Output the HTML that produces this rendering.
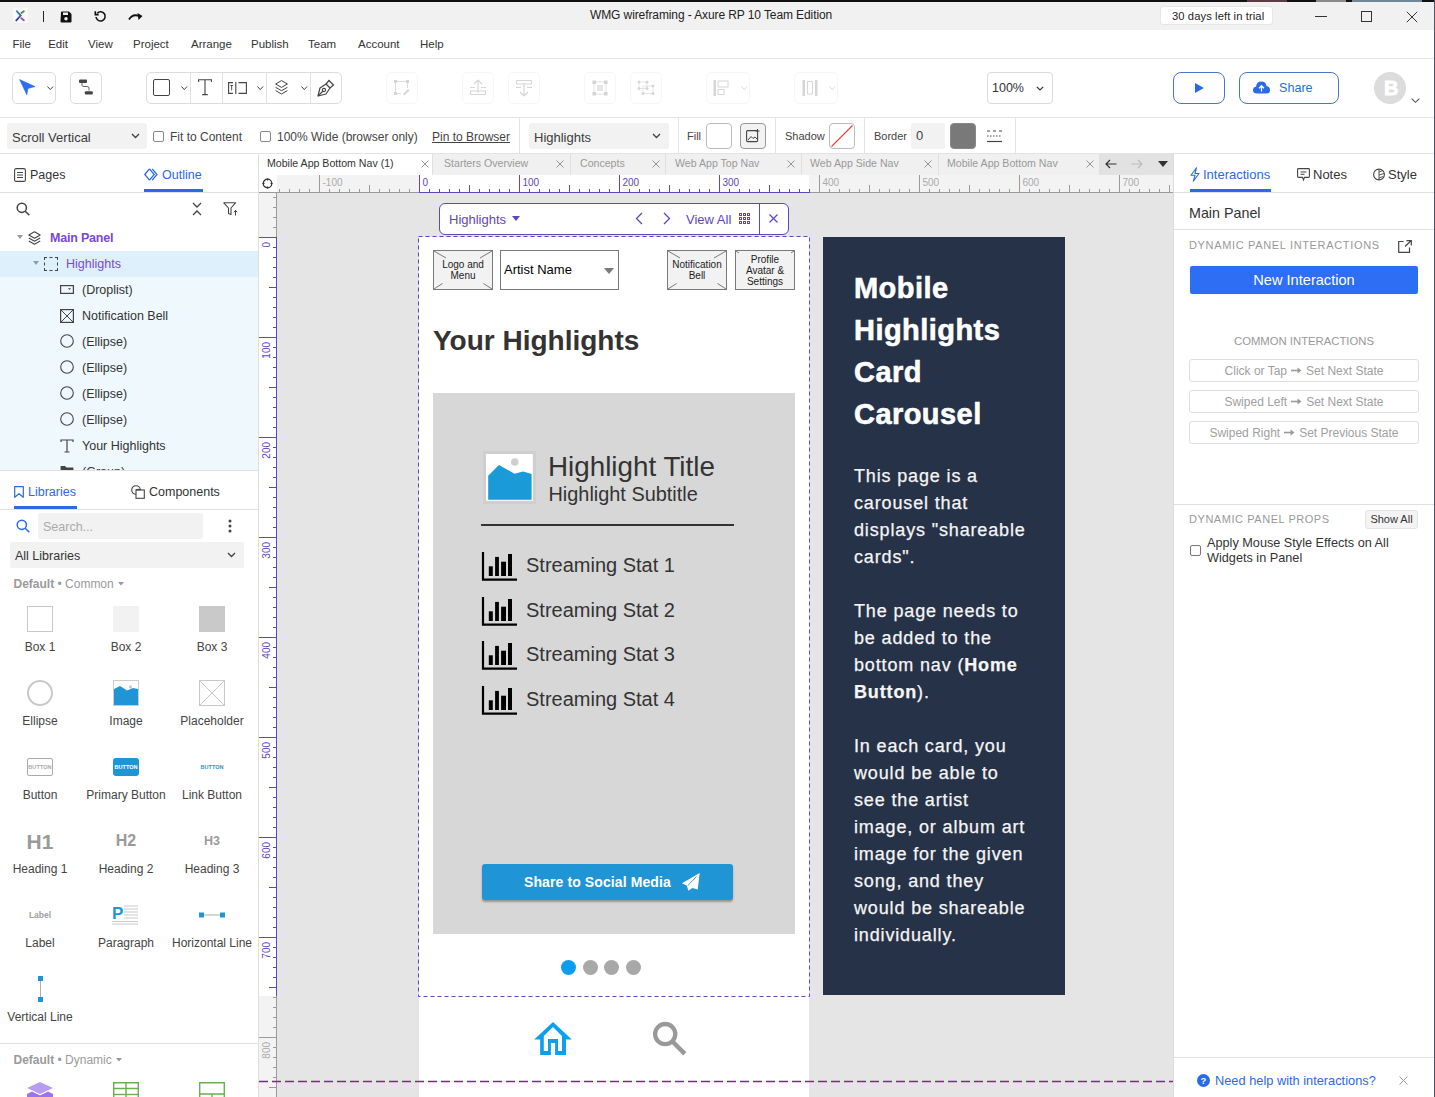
<!DOCTYPE html>
<html><head><meta charset="utf-8">
<style>
*{margin:0;padding:0;box-sizing:border-box}
html,body{width:1435px;height:1097px;overflow:hidden;background:#fff;font-family:"Liberation Sans",sans-serif;color:#333}
.a{position:absolute}
.t{position:absolute;white-space:nowrap;line-height:1}
svg{position:absolute;overflow:visible}
.hl{position:absolute;background:#e3e3e3}
.vl{position:absolute;background:#e3e3e3}
</style></head><body>
<!-- top black strip -->
<div class="a" style="left:0;top:0;width:1435px;height:2px;background:#111"></div><div class="a" style="left:1247px;top:0;width:40px;height:2px;background:#5c3a48"></div><div class="a" style="left:1316px;top:0;width:30px;height:2px;background:#8a8a8a"></div><div class="a" style="left:1352px;top:0;width:70px;height:2px;background:#6f8796"></div>
<!-- title bar -->
<div class="a" style="left:0;top:2px;width:1434px;height:28px;background:#f1f1f1"></div>
<div class="a" style="left:1434px;top:0;width:1px;height:1097px;background:#4c5263"></div>

<div class="a" style="left:13px;top:8px;width:15px;height:15px;background:#fafafa;border-radius:3px"></div>
<svg style="left:14px;top:9px" width="13" height="13" viewBox="0 0 13 13"><defs><linearGradient id="lg" x1="0" y1="0" x2="0" y2="1"><stop offset="0" stop-color="#3b8fa8"/><stop offset="1" stop-color="#3a35a8"/></linearGradient></defs>
 <path d="M2.75 2.2 L6.7 6.6 L2.3 11.4" stroke="url(#lg)" stroke-width="1.9" fill="none" stroke-linecap="round"/>
 <path d="M7.4 4 L9.8 2.2" stroke="#4f8f4a" stroke-width="1.9" fill="none" stroke-linecap="round"/>
 <path d="M7.4 9.2 L9.8 11.3" stroke="#b04ab0" stroke-width="1.9" fill="none" stroke-linecap="round"/>
</svg>
<div class="a" style="left:43px;top:11px;width:1px;height:11px;background:#222"></div>
<svg style="left:60px;top:11px" width="12" height="12" viewBox="0 0 12 12"><path d="M1 1.5 Q1 0.5 2 0.5 H9 L11.5 3 V10.5 Q11.5 11.5 10.5 11.5 H1.5 Q0.5 11.5 0.5 10.5 Z" fill="#111"/><rect x="3" y="1.5" width="5" height="2.5" fill="#f1f1f1"/><circle cx="6" cy="7.8" r="1.7" fill="#f1f1f1"/></svg>
<svg style="left:94px;top:10px" width="13" height="13" viewBox="0 0 13 13"><path d="M3.2 3.2 A4.6 4.6 0 1 1 2 7" stroke="#111" stroke-width="1.6" fill="none"/><path d="M1.3 1.2 V4.6 H4.7" stroke="#111" stroke-width="1.6" fill="none"/></svg>
<svg style="left:128px;top:11px" width="16" height="10" viewBox="0 0 16 10"><path d="M1 8.5 Q5 2 12 5.5" stroke="#111" stroke-width="1.8" fill="none"/><path d="M9.5 2 L14.5 5 L10.5 9 Z" fill="#111"/></svg>
<div class="t" style="left:590px;top:9px;font-size:12px;color:#222;letter-spacing:-0.1px">WMG wireframing - Axure RP 10 Team Edition</div>
<div class="a" style="left:1160px;top:6px;width:113px;height:19px;background:#fff;border:1px solid #e6e6e6;border-radius:3px"></div>
<div class="t" style="left:1172px;top:10.5px;font-size:11.2px;color:#222;letter-spacing:0.1px">30 days left in trial</div>
<div class="a" style="left:1315px;top:16px;width:12px;height:1px;background:#333"></div>
<div class="a" style="left:1361px;top:11px;width:11px;height:11px;border:1px solid #333"></div>
<svg style="left:1406px;top:11px" width="12" height="12" viewBox="0 0 12 12"><path d="M0.8 0.8 L11.2 11.2 M11.2 0.8 L0.8 11.2" stroke="#333" stroke-width="1"/></svg>

<!-- menu bar -->
<div class="hl" style="left:0;top:58px;width:1434px;height:1px"></div>
<div class="t" style="left:12.4px;top:39px;font-size:11.5px;color:#333">File</div>
<div class="t" style="left:48.2px;top:39px;font-size:11.5px;color:#333">Edit</div>
<div class="t" style="left:88px;top:39px;font-size:11.5px;color:#333">View</div>
<div class="t" style="left:133px;top:39px;font-size:11.5px;color:#333">Project</div>
<div class="t" style="left:191px;top:39px;font-size:11.5px;color:#333">Arrange</div>
<div class="t" style="left:251px;top:39px;font-size:11.5px;color:#333">Publish</div>
<div class="t" style="left:308px;top:39px;font-size:11.5px;color:#333">Team</div>
<div class="t" style="left:358px;top:39px;font-size:11.5px;color:#333">Account</div>
<div class="t" style="left:420px;top:39px;font-size:11.5px;color:#333">Help</div>

<!-- toolbar -->
<div class="hl" style="left:0;top:117px;width:1434px;height:1px"></div>
<div class="a" style="left:12px;top:72px;width:44px;height:32px;border:1px solid #dcdcdc;border-radius:5px"></div>
<svg style="left:19px;top:79px" width="17" height="17" viewBox="0 0 17 17"><path d="M0.6 0.6 L16 7.6 L9 9.4 L7.8 15.7 Z" fill="#2b6cf0" stroke="#2b6cf0" stroke-width="0.6" stroke-linejoin="round"/></svg><svg style="left:46.5px;top:86px" width="6.5" height="4.5" viewBox="0 0 6.5 4.5"><path d="M0.5 0.5 L3.25 3.6 L6 0.5" stroke="#444" stroke-width="1" fill="none"/></svg><div class="a" style="left:70px;top:72px;width:32px;height:32px;border:1px solid #dcdcdc;border-radius:5px"></div>
<svg style="left:78px;top:79px" width="16" height="16" viewBox="0 0 16 16"><rect x="1" y="0.5" width="8" height="3.5" rx="1" fill="#444"/><rect x="6.8" y="12.3" width="8" height="3.3" rx="1" fill="#444"/><path d="M4 4 V6.5 Q4 7.5 6 7.5 H9 Q11 7.5 11 9 V11.5" stroke="#555" stroke-width="0.9" fill="none"/></svg><div class="a" style="left:146px;top:72px;width:196px;height:32px;border:1px solid #dcdcdc;border-radius:5px"></div>
<div class="a" style="left:190px;top:73px;width:1px;height:30px;background:#e0e0e0"></div><div class="a" style="left:222px;top:73px;width:1px;height:30px;background:#e0e0e0"></div><div class="a" style="left:266px;top:73px;width:1px;height:30px;background:#e0e0e0"></div><div class="a" style="left:310px;top:73px;width:1px;height:30px;background:#e0e0e0"></div><div class="a" style="left:153px;top:79px;width:17px;height:17px;border:1.5px solid #444;border-radius:2px"></div><svg style="left:181px;top:86px" width="6.5" height="4.5" viewBox="0 0 6.5 4.5"><path d="M0.5 0.5 L3.25 3.6 L6 0.5" stroke="#444" stroke-width="1" fill="none"/></svg><svg style="left:198px;top:79px" width="14" height="17" viewBox="0 0 14 17"><path d="M0.6 3 V0.8 H13.4 V3 M7 0.8 V15.6 M4.2 15.6 H9.8" stroke="#444" stroke-width="1.1" fill="none"/></svg><svg style="left:228px;top:82px" width="19" height="12" viewBox="0 0 19 12"><path d="M5 0.6 H0.6 V11.4 H5 M7.8 0 V12 M10.5 0.6 H18.4 V11.4 H10.5" stroke="#444" stroke-width="1.1" fill="none"/><path d="M2.3 3.5 H5 M3.65 3.5 V8.5" stroke="#444" stroke-width="0.9"/></svg><svg style="left:257px;top:86px" width="6.5" height="4.5" viewBox="0 0 6.5 4.5"><path d="M0.5 0.5 L3.25 3.6 L6 0.5" stroke="#444" stroke-width="1" fill="none"/></svg><svg style="left:275px;top:80px" width="13" height="15" viewBox="0 0 13 15"><path d="M6.5 0.6 L12.4 4 L6.5 7.4 L0.6 4 Z" stroke="#444" stroke-width="1" fill="none" stroke-linejoin="round"/><path d="M0.6 7.3 L6.5 10.7 L12.4 7.3 M0.6 10.6 L6.5 14 L12.4 10.6" stroke="#444" stroke-width="1" fill="none" stroke-linejoin="round"/></svg><svg style="left:301px;top:86px" width="6.5" height="4.5" viewBox="0 0 6.5 4.5"><path d="M0.5 0.5 L3.25 3.6 L6 0.5" stroke="#444" stroke-width="1" fill="none"/></svg><svg style="left:317px;top:79px" width="18" height="18" viewBox="0 0 18 18"><path d="M1 17 L3 9 L9 5 L13 9 L9 15 Z" stroke="#444" stroke-width="1.2" fill="none" stroke-linejoin="round"/><path d="M9 5 L12 1.5 L16.5 6 L13 9" stroke="#444" stroke-width="1.2" fill="none"/><circle cx="7" cy="11" r="1.6" stroke="#444" stroke-width="1.1" fill="none"/><path d="M1 17 L6 12" stroke="#444" stroke-width="1.1"/></svg><div class="a" style="left:386px;top:72px;width:32px;height:32px;border:1px solid #f6f6f6;border-radius:5px"></div><div class="a" style="left:462px;top:72px;width:32px;height:32px;border:1px solid #f6f6f6;border-radius:5px"></div><div class="a" style="left:508px;top:72px;width:32px;height:32px;border:1px solid #f6f6f6;border-radius:5px"></div><div class="a" style="left:584px;top:72px;width:32px;height:32px;border:1px solid #f6f6f6;border-radius:5px"></div><div class="a" style="left:630px;top:72px;width:32px;height:32px;border:1px solid #f6f6f6;border-radius:5px"></div><div class="a" style="left:706px;top:72px;width:44px;height:32px;border:1px solid #f6f6f6;border-radius:5px"></div><div class="a" style="left:794px;top:72px;width:44px;height:32px;border:1px solid #f6f6f6;border-radius:5px"></div><svg style="left:393px;top:79px" width="18" height="18" viewBox="0 0 18 18"><rect x="1" y="1" width="3" height="3" fill="#d6d6d6"/><rect x="13" y="1" width="3" height="3" fill="#d6d6d6"/><rect x="1" y="13" width="3" height="3" fill="#d6d6d6"/><path d="M4 2.5 H13 M2.5 4 V13 M14.5 4 V9 M4 14.5 H8" stroke="#d6d6d6" stroke-width="0.8"/><path d="M10 15 L15 10 L16.5 11.5 L11.5 16.5 Z" fill="#d6d6d6"/></svg><svg style="left:469px;top:79px" width="18" height="18" viewBox="0 0 18 18"><path d="M9 1 L5 5 M9 1 L13 5 M9 1 V14" stroke="#d6d6d6" stroke-width="1.2" fill="none"/><rect x="1.5" y="12" width="15" height="3.5" rx="0.5" stroke="#d6d6d6" stroke-width="1.2" fill="none"/><path d="M1 8.5 H6 M12 8.5 H17" stroke="#d6d6d6" stroke-width="1"/></svg><svg style="left:515px;top:79px" width="18" height="18" viewBox="0 0 18 18"><path d="M9 17 L5 13 M9 17 L13 13 M9 17 V4" stroke="#d6d6d6" stroke-width="1.2" fill="none"/><rect x="1.5" y="1.5" width="15" height="3.5" rx="0.5" stroke="#d6d6d6" stroke-width="1.2" fill="none"/><path d="M1 8.5 H6 M12 8.5 H17" stroke="#d6d6d6" stroke-width="1"/></svg><svg style="left:592px;top:80px" width="16" height="16" viewBox="0 0 16 16"><rect x="0.5" y="0.5" width="3.5" height="3.5" fill="#d6d6d6"/><rect x="12" y="0.5" width="3.5" height="3.5" fill="#d6d6d6"/><rect x="0.5" y="12" width="3.5" height="3.5" fill="#d6d6d6"/><rect x="12" y="12" width="3.5" height="3.5" fill="#d6d6d6"/><path d="M4 2 H12 M4 14 H12 M2 4 V12 M14 4 V12" stroke="#d6d6d6" stroke-width="0.7"/><rect x="5" y="5" width="6" height="6" fill="#e6e6e6"/></svg><svg style="left:637px;top:80px" width="18" height="15" viewBox="0 0 18 15"><circle cx="2" cy="2" r="1.5" fill="#d6d6d6"/><circle cx="10" cy="2" r="1.5" fill="#d6d6d6"/><circle cx="2" cy="8.5" r="1.5" fill="#d6d6d6"/><circle cx="10" cy="8.5" r="1.5" fill="#d6d6d6"/><circle cx="16" cy="6" r="1.5" fill="#d6d6d6"/><circle cx="6" cy="13.5" r="1.5" fill="#d6d6d6"/><circle cx="16" cy="13.5" r="1.5" fill="#d6d6d6"/><path d="M2 2 H10 V8.5 H2 Z M6 6 H16 V13.5 H6 Z" stroke="#d6d6d6" stroke-width="0.6" fill="none"/></svg><svg style="left:713px;top:80px" width="16" height="16" viewBox="0 0 16 16"><rect x="0.5" y="0" width="2.5" height="16" fill="#d6d6d6"/><rect x="5" y="1" width="10" height="6" stroke="#d6d6d6" stroke-width="1" fill="none"/><rect x="5" y="9.5" width="6" height="5" stroke="#d6d6d6" stroke-width="1" fill="none"/></svg><svg style="left:741px;top:86px" width="6.5" height="4.5" viewBox="0 0 6.5 4.5"><path d="M0.5 0.5 L3.25 3.6 L6 0.5" stroke="#d6d6d6" stroke-width="1" fill="none"/></svg><svg style="left:802px;top:80px" width="16" height="16" viewBox="0 0 16 16"><rect x="0.5" y="0" width="2.5" height="16" fill="#d6d6d6"/><rect x="13" y="0" width="2.5" height="16" fill="#d6d6d6"/><rect x="5.5" y="1.5" width="5" height="12.5" stroke="#d6d6d6" stroke-width="1" fill="none"/></svg><svg style="left:829px;top:86px" width="6.5" height="4.5" viewBox="0 0 6.5 4.5"><path d="M0.5 0.5 L3.25 3.6 L6 0.5" stroke="#d6d6d6" stroke-width="1" fill="none"/></svg><div class="a" style="left:987px;top:72px;width:66px;height:32px;border:1px solid #dcdcdc;border-radius:4px"></div><div class="t" style="left:992px;top:82px;font-size:12.5px;color:#333">100%</div><svg style="left:1036px;top:86px" width="8" height="5" viewBox="0 0 8 5"><path d="M0.8 0.8 L4 4 L7.2 0.8" stroke="#333" stroke-width="1.2" fill="none"/></svg><div class="a" style="left:1173px;top:72px;width:52px;height:32px;border:1.5px solid #4a74cc;border-radius:8px"></div><svg style="left:1195px;top:83px" width="9" height="10" viewBox="0 0 9 10"><path d="M0 0 L9 5 L0 10 Z" fill="#2a6ae8"/></svg><div class="a" style="left:1239px;top:72px;width:100px;height:32px;border:1.5px solid #4a74cc;border-radius:8px"></div><svg style="left:1253px;top:81px" width="17" height="13" viewBox="0 0 17 13"><path d="M4 12.5 Q0 12.5 0 9 Q0 6 3 5.8 Q3.5 0.5 8.5 0.5 Q13 0.5 13.5 5 Q17 5.5 17 9 Q17 12.5 13.5 12.5 Z" fill="#2a6ae8"/><path d="M8.5 10.5 V5 M6 7.2 L8.5 4.7 L11 7.2" stroke="#fff" stroke-width="1.3" fill="none"/></svg><div class="t" style="left:1279px;top:81.5px;font-size:12.6px;color:#2a6ae8">Share</div><div class="a" style="left:1374px;top:72px;width:32px;height:32px;border-radius:50%;background:#dcdcdc"></div><div class="t" style="left:1384px;top:78px;font-size:20px;font-weight:700;color:#fff;-webkit-text-stroke:0.8px #fff">B</div><svg style="left:1411px;top:98px" width="9" height="5" viewBox="0 0 9 5"><path d="M0.6 0.6 L4.5 4.3 L8.4 0.6" stroke="#555" stroke-width="1.1" fill="none"/></svg>
<!-- property bar -->
<div class="hl" style="left:0;top:153px;width:1434px;height:1px"></div>
<div class="a" style="left:7px;top:123px;width:140px;height:26px;background:#f2f2f2;border-radius:3px"></div><div class="t" style="left:12px;top:130.5px;font-size:13px;color:#3c3c3c">Scroll Vertical</div><svg style="left:131px;top:133px" width="9" height="6" viewBox="0 0 9 6"><path d="M1 1 L4.5 4.5 L8 1" stroke="#444" stroke-width="1.4" fill="none"/></svg><div class="a" style="left:153px;top:131px;width:11px;height:11px;border:1px solid #888;border-radius:2px;background:#fff"></div><div class="t" style="left:170px;top:131px;font-size:12px;color:#444">Fit to Content</div><div class="a" style="left:260px;top:131px;width:11px;height:11px;border:1px solid #888;border-radius:2px;background:#fff"></div><div class="t" style="left:277px;top:131px;font-size:12px;color:#444">100% Wide (browser only)</div><div class="t" style="left:432px;top:131px;font-size:12px;color:#444;text-decoration:underline">Pin to Browser</div><div class="a" style="left:519px;top:118px;width:1px;height:35px;background:#e3e3e3"></div><div class="a" style="left:529px;top:123px;width:140px;height:26px;background:#f2f2f2;border-radius:3px"></div><div class="t" style="left:534px;top:130.5px;font-size:13px;color:#3c3c3c">Highlights</div><svg style="left:652px;top:133px" width="9" height="6" viewBox="0 0 9 6"><path d="M1 1 L4.5 4.5 L8 1" stroke="#444" stroke-width="1.4" fill="none"/></svg><div class="a" style="left:678px;top:118px;width:1px;height:35px;background:#e3e3e3"></div><div class="t" style="left:687px;top:131px;font-size:11px;color:#444">Fill</div><div class="a" style="left:706px;top:123px;width:26px;height:26px;border:1px solid #bbb;border-radius:4px;background:#fff"></div><div class="a" style="left:740px;top:123px;width:26px;height:26px;border:1px solid #999;border-radius:4px;background:#f2f2f2"></div><svg style="left:746px;top:129px" width="14" height="14" viewBox="0 0 14 14"><rect x="0.6" y="1.6" width="11" height="11" rx="1" stroke="#444" stroke-width="1.1" fill="none"/><path d="M2 11 L5 7.5 L7 9.5 L9 8 L11.5 10.5" stroke="#444" stroke-width="1" fill="none"/><path d="M11.5 0 V4 M9.5 2 H13.5" stroke="#444" stroke-width="1"/></svg><div class="a" style="left:775px;top:118px;width:1px;height:35px;background:#e3e3e3"></div><div class="t" style="left:785px;top:131px;font-size:11px;color:#444">Shadow</div><div class="a" style="left:829px;top:123px;width:26px;height:26px;border:1px solid #bbb;border-radius:4px;background:#fff;overflow:hidden"></div><svg style="left:829px;top:123px" width="26" height="26" viewBox="0 0 26 26"><path d="M2.5 23.5 L23.5 2.5" stroke="#e0443a" stroke-width="1.1"/></svg><div class="a" style="left:864px;top:118px;width:1px;height:35px;background:#e3e3e3"></div><div class="t" style="left:874px;top:131px;font-size:11px;color:#444">Border</div><div class="a" style="left:911px;top:123px;width:34px;height:26px;background:#f2f2f2;border-radius:3px"></div><div class="t" style="left:916px;top:129px;font-size:13px;color:#444">0</div><div class="a" style="left:950px;top:123px;width:26px;height:26px;border:1px solid #888;border-radius:4px;background:#797979"></div><svg style="left:987px;top:129px" width="15" height="14" viewBox="0 0 15 14"><path d="M0 2 H15" stroke="#444" stroke-width="1" stroke-dasharray="3 3"/><path d="M0 7 H15" stroke="#444" stroke-width="1" stroke-dasharray="1.5 1.5"/><path d="M0 12.5 H15" stroke="#444" stroke-width="1.2"/></svg><div class="a" style="left:1015px;top:118px;width:1px;height:35px;background:#e3e3e3"></div>
<!-- left panel -->
<div class="a" style="left:258px;top:154px;width:1px;height:943px;background:#dedede"></div><svg style="left:14px;top:168px" width="12" height="14" viewBox="0 0 12 14"><rect x="0.6" y="0.6" width="10.8" height="12.8" rx="1.5" stroke="#444" stroke-width="1.1" fill="none"/><path d="M3 4.5 H9 M3 7 H9 M3 9.5 H9" stroke="#444" stroke-width="1"/></svg><div class="t" style="left:30px;top:169px;font-size:12.5px;color:#333">Pages</div><svg style="left:144px;top:168px" width="14" height="13" viewBox="0 0 14 13"><path d="M5.5 0.8 L0.8 6.5 L5.5 12.2 M5.5 12.2 L10.2 6.5 L5.5 0.8" stroke="#2a6ae8" stroke-width="1.3" fill="none"/><path d="M8.2 0.8 L13 6.5 L8.2 12.2" stroke="#2a6ae8" stroke-width="1.3" fill="none"/></svg><div class="t" style="left:162px;top:169px;font-size:12.5px;color:#2a6ae8">Outline</div><div class="a" style="left:144px;top:189px;width:59px;height:3px;background:#2a6ae8"></div><div class="a" style="left:0;top:192px;width:258px;height:1px;background:#e0e0e0"></div><svg style="left:16px;top:202px" width="14" height="14" viewBox="0 0 14 14"><circle cx="5.8" cy="5.8" r="4.6" stroke="#444" stroke-width="1.5" fill="none"/><path d="M9.2 9.2 L13.3 13.3" stroke="#444" stroke-width="1.6"/></svg><svg style="left:192px;top:202px" width="10" height="14" viewBox="0 0 10 14"><path d="M1 1 L5 5 L9 1 M1 13 L5 9 L9 13" stroke="#444" stroke-width="1.3" fill="none"/></svg><svg style="left:223px;top:202px" width="16" height="14" viewBox="0 0 16 14"><path d="M0.8 0.8 H12.5 L8 6 V12.5 L5.5 11.5 V6 Z" stroke="#444" stroke-width="1.1" fill="none" stroke-linejoin="round"/><path d="M12.5 13.5 V8.5 M10.8 10.2 L12.5 8.5 L14.2 10.2" stroke="#444" stroke-width="1" fill="none"/></svg><svg style="left:17px;top:235px" width="6" height="5" viewBox="0 0 6 5"><path d="M0 0 H6 L3 4 Z" fill="#999"/></svg><svg style="left:28px;top:231px" width="13" height="14" viewBox="0 0 13 14"><path d="M6.5 0.8 L12.2 4 L6.5 7.2 L0.8 4 Z" stroke="#444" stroke-width="1.1" fill="none" stroke-linejoin="round"/><path d="M0.8 7 L6.5 10.2 L12.2 7 M0.8 10 L6.5 13.2 L12.2 10" stroke="#444" stroke-width="1.1" fill="none" stroke-linejoin="round"/></svg><div class="t" style="left:50px;top:232px;font-size:12.5px;font-weight:700;color:#7a48d6;letter-spacing:-0.2px">Main Panel</div><div class="a" style="left:0;top:251px;width:258px;height:26px;background:#ddf0fc"></div><div class="a" style="left:0;top:277px;width:258px;height:193px;background:#eff9fd"></div><svg style="left:33px;top:261px" width="6" height="5" viewBox="0 0 6 5"><path d="M0 0 H6 L3 4 Z" fill="#999"/></svg><div class="a" style="left:44px;top:257px;width:14px;height:14px;border:1px dashed #444"></div><div class="t" style="left:66px;top:258px;font-size:12.5px;color:#7a48d6">Highlights</div><svg style="left:60px;top:285px" width="14" height="9" viewBox="0 0 14 9"><rect x="0.6" y="0.6" width="12.8" height="7.8" stroke="#444" stroke-width="1.2" fill="none"/><path d="M8 3.3 H11 L9.5 5 Z" fill="#444"/></svg><div class="t" style="left:82px;top:284px;font-size:12.5px;color:#333">(Droplist)</div><svg style="left:60px;top:309px" width="14" height="14" viewBox="0 0 14 14"><rect x="0.6" y="0.6" width="12.8" height="12.8" stroke="#444" stroke-width="1.2" fill="none"/><path d="M1 1 L13 13 M13 1 L1 13" stroke="#444" stroke-width="1"/></svg><div class="t" style="left:82px;top:310px;font-size:12.5px;color:#333">Notification Bell</div><svg style="left:60px;top:334px" width="14" height="14" viewBox="0 0 14 14"><circle cx="7" cy="7" r="6.3" stroke="#444" stroke-width="1.1" fill="none"/></svg><div class="t" style="left:82px;top:336px;font-size:12.5px;color:#333">(Ellipse)</div><svg style="left:60px;top:360px" width="14" height="14" viewBox="0 0 14 14"><circle cx="7" cy="7" r="6.3" stroke="#444" stroke-width="1.1" fill="none"/></svg><div class="t" style="left:82px;top:362px;font-size:12.5px;color:#333">(Ellipse)</div><svg style="left:60px;top:386px" width="14" height="14" viewBox="0 0 14 14"><circle cx="7" cy="7" r="6.3" stroke="#444" stroke-width="1.1" fill="none"/></svg><div class="t" style="left:82px;top:388px;font-size:12.5px;color:#333">(Ellipse)</div><svg style="left:60px;top:412px" width="14" height="14" viewBox="0 0 14 14"><circle cx="7" cy="7" r="6.3" stroke="#444" stroke-width="1.1" fill="none"/></svg><div class="t" style="left:82px;top:414px;font-size:12.5px;color:#333">(Ellipse)</div><svg style="left:60px;top:439px" width="14" height="14" viewBox="0 0 14 14"><path d="M1 3 V1 H13 V3 M7 1 V13 M4.5 13 H9.5" stroke="#444" stroke-width="1.2" fill="none"/></svg><div class="t" style="left:82px;top:440px;font-size:12.5px;color:#333">Your Highlights</div><div class="a" style="left:0;top:464px;width:258px;height:6px;overflow:hidden"><svg style="left:60px;top:1px" width="14" height="12" viewBox="0 0 14 12"><path d="M0.6 1 H5 L6.5 2.5 H13.4 V11 H0.6 Z" fill="#444"/></svg><div class="t" style="left:82px;top:2px;font-size:12.5px;color:#333">(Group)</div></div><div class="a" style="left:0;top:470px;width:258px;height:1px;background:#e0e0e0"></div><svg style="left:14px;top:486px" width="10" height="12" viewBox="0 0 10 12"><path d="M0.7 0.7 H9.3 V11.3 L5 7.8 L0.7 11.3 Z" stroke="#2a6ae8" stroke-width="1.2" fill="none" stroke-linejoin="round"/></svg><div class="t" style="left:28px;top:486px;font-size:12.5px;color:#2a6ae8">Libraries</div><div class="a" style="left:14px;top:506px;width:63px;height:3px;background:#2a6ae8"></div><svg style="left:131px;top:485px" width="14" height="14" viewBox="0 0 14 14"><circle cx="5" cy="5" r="4.3" stroke="#444" stroke-width="1.1" fill="none"/><rect x="5" y="5" width="8.3" height="8.3" stroke="#444" stroke-width="1.1" fill="#fff"/><path d="M5 5 A4.3 4.3 0 0 1 9.3 5" stroke="#444" stroke-width="1.1" fill="none"/></svg><div class="t" style="left:149px;top:486px;font-size:12.5px;color:#333">Components</div><div class="a" style="left:0;top:509px;width:258px;height:1px;background:#e0e0e0"></div><svg style="left:16px;top:519px" width="14" height="14" viewBox="0 0 14 14"><circle cx="5.8" cy="5.8" r="4.6" stroke="#2a6ae8" stroke-width="1.5" fill="none"/><path d="M9.2 9.2 L13.3 13.3" stroke="#2a6ae8" stroke-width="1.6"/></svg><div class="a" style="left:38px;top:513px;width:165px;height:26px;background:#f2f2f2;border-radius:2px"></div><div class="t" style="left:43px;top:521px;font-size:12.5px;color:#aaa">Search...</div><svg style="left:228px;top:519px" width="4" height="14" viewBox="0 0 4 14"><circle cx="2" cy="2" r="1.5" fill="#444"/><circle cx="2" cy="7" r="1.5" fill="#444"/><circle cx="2" cy="12" r="1.5" fill="#444"/></svg><div class="a" style="left:10px;top:542px;width:234px;height:26px;background:#f2f2f2;border-radius:2px"></div><div class="t" style="left:15px;top:550px;font-size:12.5px;color:#333">All Libraries</div><svg style="left:227px;top:552px" width="9" height="6" viewBox="0 0 9 6"><path d="M1 1 L4.5 4.5 L8 1" stroke="#444" stroke-width="1.4" fill="none"/></svg><div class="t" style="left:13.5px;top:578px;font-size:12px;color:#9a9a9a"><b>Default</b> &bull; Common</div><svg style="left:118px;top:582px" width="6" height="4" viewBox="0 0 6 4"><path d="M0 0 H6 L3 3.5 Z" fill="#999"/></svg>
<!-- canvas -->
<div class="t" style="left:-20px;width:120px;text-align:center;top:641.0px;font-size:12px;color:#444">Box 1</div><div class="t" style="left:66px;width:120px;text-align:center;top:641.0px;font-size:12px;color:#444">Box 2</div><div class="t" style="left:152px;width:120px;text-align:center;top:641.0px;font-size:12px;color:#444">Box 3</div><div class="t" style="left:-20px;width:120px;text-align:center;top:715.0px;font-size:12px;color:#444">Ellipse</div><div class="t" style="left:66px;width:120px;text-align:center;top:715.0px;font-size:12px;color:#444">Image</div><div class="t" style="left:152px;width:120px;text-align:center;top:715.0px;font-size:12px;color:#444">Placeholder</div><div class="t" style="left:-20px;width:120px;text-align:center;top:789.0px;font-size:12px;color:#444">Button</div><div class="t" style="left:66px;width:120px;text-align:center;top:789.0px;font-size:12px;color:#444">Primary Button</div><div class="t" style="left:152px;width:120px;text-align:center;top:789.0px;font-size:12px;color:#444">Link Button</div><div class="t" style="left:-20px;width:120px;text-align:center;top:863.0px;font-size:12px;color:#444">Heading 1</div><div class="t" style="left:66px;width:120px;text-align:center;top:863.0px;font-size:12px;color:#444">Heading 2</div><div class="t" style="left:152px;width:120px;text-align:center;top:863.0px;font-size:12px;color:#444">Heading 3</div><div class="t" style="left:-20px;width:120px;text-align:center;top:937.0px;font-size:12px;color:#444">Label</div><div class="t" style="left:66px;width:120px;text-align:center;top:937.0px;font-size:12px;color:#444">Paragraph</div><div class="t" style="left:152px;width:120px;text-align:center;top:937.0px;font-size:12px;color:#444">Horizontal Line</div><div class="t" style="left:-20px;width:120px;text-align:center;top:1011.0px;font-size:12px;color:#444">Vertical Line</div><div class="a" style="left:27.0px;top:605.5px;width:26px;height:26px;border:1px solid #c8c8c8;background:#fff"></div><div class="a" style="left:113.0px;top:605.5px;width:26px;height:26px;background:#f2f2f2"></div><div class="a" style="left:199.0px;top:605.5px;width:26px;height:26px;background:#c9c9c9"></div><div class="a" style="left:27.0px;top:679.5px;width:26px;height:26px;border:2px solid #c9c9c9;border-radius:50%"></div><svg style="left:113.0px;top:679.5px;width:26px;height:26px" viewBox="0 0 26 26"><rect x="0.5" y="0.5" width="25" height="25" fill="#fff" stroke="#ccc" stroke-width="1"/><path d="M1 9 L7 6 L14 10.5 L20 8 L25 9 V25 H1 Z" fill="#1f95d6"/><circle cx="17.5" cy="7" r="1.7" fill="#ccc"/></svg><svg style="left:199.0px;top:679.5px;width:26px;height:26px" viewBox="0 0 26 26"><rect x="0.5" y="0.5" width="25" height="25" fill="#fff" stroke="#c8c8c8" stroke-width="1"/><path d="M0.5 0.5 L25.5 25.5 M25.5 0.5 L0.5 25.5" stroke="#c8c8c8" stroke-width="1"/></svg><div class="a" style="left:27.0px;top:757.5px;width:26px;height:18px;border:1px solid #aaa;border-radius:2px"></div><div class="t" style="left:10px;width:60px;text-align:center;top:764.5px;font-size:5.5px;font-weight:700;color:#aaa;letter-spacing:0.1px">BUTTON</div><div class="a" style="left:113.0px;top:757.5px;width:26px;height:18px;background:#1f95d6;border-radius:3px"></div><div class="t" style="left:96px;width:60px;text-align:center;top:764.5px;font-size:5.5px;font-weight:700;color:#fff">BUTTON</div><div class="t" style="left:182px;width:60px;text-align:center;top:764.5px;font-size:5.5px;font-weight:700;color:#1f95d6">BUTTON</div><div class="t" style="left:10px;width:60px;text-align:center;top:830.5px;font-size:21px;font-weight:700;color:#9a9a9a">H1</div><div class="t" style="left:96px;width:60px;text-align:center;top:832.5px;font-size:16px;font-weight:700;color:#9a9a9a">H2</div><div class="t" style="left:182px;width:60px;text-align:center;top:834.5px;font-size:12.5px;font-weight:700;color:#9a9a9a">H3</div><div class="t" style="left:10px;width:60px;text-align:center;top:910.5px;font-size:8.5px;font-weight:700;color:#a0a0a0">Label</div><div class="t" style="left:112px;top:904.5px;font-size:17px;font-weight:700;color:#1f95d6">P</div><svg style="left:124px;top:904.5px" width="14" height="20" viewBox="0 0 14 20"><path d="M0 1 H14 M0 4 H14 M0 7 H14 M0 10 H14 M0 13 H14" stroke="#bbb" stroke-width="0.8"/><path d="M-12 16.5 H14 M-12 19 H14" stroke="#bbb" stroke-width="0.8"/></svg><svg style="left:199px;top:911.5px" width="26" height="6" viewBox="0 0 26 6"><rect x="0" y="0.5" width="5" height="5" fill="#1f95d6"/><rect x="21" y="0.5" width="5" height="5" fill="#1f95d6"/><path d="M5 3 H21" stroke="#999" stroke-width="0.8"/></svg><svg style="left:37.5px;top:975.5px" width="5" height="26" viewBox="0 0 5 26"><rect x="0" y="0" width="5" height="5" fill="#1f95d6"/><rect x="0" y="21" width="5" height="5" fill="#1f95d6"/><path d="M2.5 5 V21" stroke="#999" stroke-width="0.8"/></svg><div class="a" style="left:0;top:1043px;width:258px;height:1px;background:#e0e0e0"></div><div class="t" style="left:13.5px;top:1054px;font-size:12px;color:#9a9a9a"><b>Default</b> &bull; Dynamic</div><svg style="left:116px;top:1058px" width="6" height="4" viewBox="0 0 6 4"><path d="M0 0 H6 L3 3.5 Z" fill="#999"/></svg><svg style="left:27px;top:1082px" width="26" height="15" viewBox="0 0 26 15"><path d="M13 0 L26 6 L13 12 L0 6 Z" fill="#b79cf0"/><path d="M0 12 L5 9.5 L13 13.5 L21 9.5 L26 12 L26 15 L0 15 Z" fill="#9b74ea"/></svg><svg style="left:113px;top:1082px" width="26" height="15" viewBox="0 0 26 15"><path d="M0.7 15 V0.7 H25.3 V15 M0.7 6.5 H25.3 M13 0.7 V15" stroke="#6ab04c" stroke-width="1.4" fill="none"/><path d="M0.7 12.5 H25.3" stroke="#6ab04c" stroke-width="1.4"/></svg><svg style="left:199px;top:1082px" width="26" height="15" viewBox="0 0 26 15"><path d="M0.7 15 V0.7 H25.3 V15 M0.7 12 H25.3 M13 12 V15" stroke="#6ab04c" stroke-width="1.4" fill="none"/></svg>
<div class="a" style="left:259px;top:192px;width:914px;height:905px;background:#e5e5e5"></div><div class="a" style="left:259px;top:154px;width:914px;height:21px;background:#f0f0f0"></div><div class="a" style="left:259px;top:154px;width:174px;height:21px;background:#fff;border-right:1px solid #e0e0e0"></div><div class="t" style="left:267px;top:158px;font-size:10.6px;color:#333">Mobile App Bottom Nav (1)</div><svg style="left:420.5px;top:160px" width="8" height="8" viewBox="0 0 8 8"><path d="M0.5 0.5 L7.5 7.5 M7.5 0.5 L0.5 7.5" stroke="#8a8a8a" stroke-width="0.9"/></svg><div class="a" style="left:433px;top:154px;width:138px;height:21px;background:#f0f0f0;border-right:1px solid #e0e0e0"></div><div class="t" style="left:444px;top:158px;font-size:10.6px;color:#999">Starters Overview</div><svg style="left:555.5px;top:160px" width="8" height="8" viewBox="0 0 8 8"><path d="M0.5 0.5 L7.5 7.5 M7.5 0.5 L0.5 7.5" stroke="#8a8a8a" stroke-width="0.9"/></svg><div class="a" style="left:571px;top:154px;width:95px;height:21px;background:#f0f0f0;border-right:1px solid #e0e0e0"></div><div class="t" style="left:580px;top:158px;font-size:10.6px;color:#999">Concepts</div><svg style="left:651.5px;top:160px" width="8" height="8" viewBox="0 0 8 8"><path d="M0.5 0.5 L7.5 7.5 M7.5 0.5 L0.5 7.5" stroke="#8a8a8a" stroke-width="0.9"/></svg><div class="a" style="left:666px;top:154px;width:136px;height:21px;background:#f0f0f0;border-right:1px solid #e0e0e0"></div><div class="t" style="left:675px;top:158px;font-size:10.6px;color:#999">Web App Top Nav</div><svg style="left:786.5px;top:160px" width="8" height="8" viewBox="0 0 8 8"><path d="M0.5 0.5 L7.5 7.5 M7.5 0.5 L0.5 7.5" stroke="#8a8a8a" stroke-width="0.9"/></svg><div class="a" style="left:802px;top:154px;width:137px;height:21px;background:#f0f0f0;border-right:1px solid #e0e0e0"></div><div class="t" style="left:810px;top:158px;font-size:10.6px;color:#999">Web App Side Nav</div><svg style="left:923.5px;top:160px" width="8" height="8" viewBox="0 0 8 8"><path d="M0.5 0.5 L7.5 7.5 M7.5 0.5 L0.5 7.5" stroke="#8a8a8a" stroke-width="0.9"/></svg><div class="a" style="left:939px;top:154px;width:161px;height:21px;background:#f0f0f0;border-right:1px solid #e0e0e0"></div><div class="t" style="left:947px;top:158px;font-size:10.6px;color:#999">Mobile App Bottom Nav</div><svg style="left:1085.5px;top:160px" width="8" height="8" viewBox="0 0 8 8"><path d="M0.5 0.5 L7.5 7.5 M7.5 0.5 L0.5 7.5" stroke="#8a8a8a" stroke-width="0.9"/></svg><div class="a" style="left:1100px;top:154px;width:73px;height:21px;background:#e2e2e2"></div><svg style="left:1105px;top:159px" width="12" height="10" viewBox="0 0 12 10"><path d="M11.5 5 H1 M5 1 L1 5 L5 9" stroke="#333" stroke-width="1.2" fill="none"/></svg><svg style="left:1131px;top:159px" width="12" height="10" viewBox="0 0 12 10"><path d="M0.5 5 H11 M7 1 L11 5 L7 9" stroke="#bbb" stroke-width="1.2" fill="none"/></svg><svg style="left:1158px;top:161px" width="10" height="6" viewBox="0 0 10 6"><path d="M0 0 H10 L5 6 Z" fill="#333"/></svg><div class="a" style="left:259px;top:175px;width:914px;height:17px;background:#f3f3f3"></div><div class="a" style="left:420px;top:175px;width:389px;height:17px;background:#fff"></div><div class="a" style="left:259px;top:192px;width:914px;height:1px;background:#9a9a9a"></div><div class="a" style="left:419px;top:192px;width:391px;height:1px;background:#6146bd"></div><div class="a" style="left:279.0px;top:189px;width:1px;height:3px;background:#9a9a9a"></div><div class="a" style="left:289.0px;top:189px;width:1px;height:3px;background:#9a9a9a"></div><div class="a" style="left:299.0px;top:189px;width:1px;height:3px;background:#9a9a9a"></div><div class="a" style="left:309.0px;top:189px;width:1px;height:3px;background:#9a9a9a"></div><div class="a" style="left:319.0px;top:175px;width:1px;height:17px;background:#9a9a9a"></div><div class="t" style="left:322.5px;top:178px;font-size:10px;color:#aaa">-100</div><div class="a" style="left:329.0px;top:189px;width:1px;height:3px;background:#9a9a9a"></div><div class="a" style="left:339.0px;top:189px;width:1px;height:3px;background:#9a9a9a"></div><div class="a" style="left:349.0px;top:189px;width:1px;height:3px;background:#9a9a9a"></div><div class="a" style="left:359.0px;top:189px;width:1px;height:3px;background:#9a9a9a"></div><div class="a" style="left:369.0px;top:185px;width:1px;height:7px;background:#9a9a9a"></div><div class="a" style="left:379.0px;top:189px;width:1px;height:3px;background:#9a9a9a"></div><div class="a" style="left:389.0px;top:189px;width:1px;height:3px;background:#9a9a9a"></div><div class="a" style="left:399.0px;top:189px;width:1px;height:3px;background:#9a9a9a"></div><div class="a" style="left:409.0px;top:189px;width:1px;height:3px;background:#9a9a9a"></div><div class="a" style="left:419.0px;top:175px;width:1px;height:17px;background:#6146bd"></div><div class="t" style="left:422.5px;top:178px;font-size:10px;color:#6146bd">0</div><div class="a" style="left:429.0px;top:189px;width:1px;height:3px;background:#6146bd"></div><div class="a" style="left:439.0px;top:189px;width:1px;height:3px;background:#6146bd"></div><div class="a" style="left:449.0px;top:189px;width:1px;height:3px;background:#6146bd"></div><div class="a" style="left:459.0px;top:189px;width:1px;height:3px;background:#6146bd"></div><div class="a" style="left:469.0px;top:185px;width:1px;height:7px;background:#6146bd"></div><div class="a" style="left:479.0px;top:189px;width:1px;height:3px;background:#6146bd"></div><div class="a" style="left:489.0px;top:189px;width:1px;height:3px;background:#6146bd"></div><div class="a" style="left:499.0px;top:189px;width:1px;height:3px;background:#6146bd"></div><div class="a" style="left:509.0px;top:189px;width:1px;height:3px;background:#6146bd"></div><div class="a" style="left:519.0px;top:175px;width:1px;height:17px;background:#6146bd"></div><div class="t" style="left:522.5px;top:178px;font-size:10px;color:#6146bd">100</div><div class="a" style="left:529.0px;top:189px;width:1px;height:3px;background:#6146bd"></div><div class="a" style="left:539.0px;top:189px;width:1px;height:3px;background:#6146bd"></div><div class="a" style="left:549.0px;top:189px;width:1px;height:3px;background:#6146bd"></div><div class="a" style="left:559.0px;top:189px;width:1px;height:3px;background:#6146bd"></div><div class="a" style="left:569.0px;top:185px;width:1px;height:7px;background:#6146bd"></div><div class="a" style="left:579.0px;top:189px;width:1px;height:3px;background:#6146bd"></div><div class="a" style="left:589.0px;top:189px;width:1px;height:3px;background:#6146bd"></div><div class="a" style="left:599.0px;top:189px;width:1px;height:3px;background:#6146bd"></div><div class="a" style="left:609.0px;top:189px;width:1px;height:3px;background:#6146bd"></div><div class="a" style="left:619.0px;top:175px;width:1px;height:17px;background:#6146bd"></div><div class="t" style="left:622.5px;top:178px;font-size:10px;color:#6146bd">200</div><div class="a" style="left:629.0px;top:189px;width:1px;height:3px;background:#6146bd"></div><div class="a" style="left:639.0px;top:189px;width:1px;height:3px;background:#6146bd"></div><div class="a" style="left:649.0px;top:189px;width:1px;height:3px;background:#6146bd"></div><div class="a" style="left:659.0px;top:189px;width:1px;height:3px;background:#6146bd"></div><div class="a" style="left:669.0px;top:185px;width:1px;height:7px;background:#6146bd"></div><div class="a" style="left:679.0px;top:189px;width:1px;height:3px;background:#6146bd"></div><div class="a" style="left:689.0px;top:189px;width:1px;height:3px;background:#6146bd"></div><div class="a" style="left:699.0px;top:189px;width:1px;height:3px;background:#6146bd"></div><div class="a" style="left:709.0px;top:189px;width:1px;height:3px;background:#6146bd"></div><div class="a" style="left:719.0px;top:175px;width:1px;height:17px;background:#6146bd"></div><div class="t" style="left:722.5px;top:178px;font-size:10px;color:#6146bd">300</div><div class="a" style="left:729.0px;top:189px;width:1px;height:3px;background:#6146bd"></div><div class="a" style="left:739.0px;top:189px;width:1px;height:3px;background:#6146bd"></div><div class="a" style="left:749.0px;top:189px;width:1px;height:3px;background:#6146bd"></div><div class="a" style="left:759.0px;top:189px;width:1px;height:3px;background:#6146bd"></div><div class="a" style="left:769.0px;top:185px;width:1px;height:7px;background:#6146bd"></div><div class="a" style="left:779.0px;top:189px;width:1px;height:3px;background:#6146bd"></div><div class="a" style="left:789.0px;top:189px;width:1px;height:3px;background:#6146bd"></div><div class="a" style="left:799.0px;top:189px;width:1px;height:3px;background:#6146bd"></div><div class="a" style="left:809.0px;top:189px;width:1px;height:3px;background:#6146bd"></div><div class="a" style="left:819.0px;top:175px;width:1px;height:17px;background:#9a9a9a"></div><div class="t" style="left:822.5px;top:178px;font-size:10px;color:#aaa">400</div><div class="a" style="left:829.0px;top:189px;width:1px;height:3px;background:#9a9a9a"></div><div class="a" style="left:839.0px;top:189px;width:1px;height:3px;background:#9a9a9a"></div><div class="a" style="left:849.0px;top:189px;width:1px;height:3px;background:#9a9a9a"></div><div class="a" style="left:859.0px;top:189px;width:1px;height:3px;background:#9a9a9a"></div><div class="a" style="left:869.0px;top:185px;width:1px;height:7px;background:#9a9a9a"></div><div class="a" style="left:879.0px;top:189px;width:1px;height:3px;background:#9a9a9a"></div><div class="a" style="left:889.0px;top:189px;width:1px;height:3px;background:#9a9a9a"></div><div class="a" style="left:899.0px;top:189px;width:1px;height:3px;background:#9a9a9a"></div><div class="a" style="left:909.0px;top:189px;width:1px;height:3px;background:#9a9a9a"></div><div class="a" style="left:919.0px;top:175px;width:1px;height:17px;background:#9a9a9a"></div><div class="t" style="left:922.5px;top:178px;font-size:10px;color:#aaa">500</div><div class="a" style="left:929.0px;top:189px;width:1px;height:3px;background:#9a9a9a"></div><div class="a" style="left:939.0px;top:189px;width:1px;height:3px;background:#9a9a9a"></div><div class="a" style="left:949.0px;top:189px;width:1px;height:3px;background:#9a9a9a"></div><div class="a" style="left:959.0px;top:189px;width:1px;height:3px;background:#9a9a9a"></div><div class="a" style="left:969.0px;top:185px;width:1px;height:7px;background:#9a9a9a"></div><div class="a" style="left:979.0px;top:189px;width:1px;height:3px;background:#9a9a9a"></div><div class="a" style="left:989.0px;top:189px;width:1px;height:3px;background:#9a9a9a"></div><div class="a" style="left:999.0px;top:189px;width:1px;height:3px;background:#9a9a9a"></div><div class="a" style="left:1009.0px;top:189px;width:1px;height:3px;background:#9a9a9a"></div><div class="a" style="left:1019.0px;top:175px;width:1px;height:17px;background:#9a9a9a"></div><div class="t" style="left:1022.5px;top:178px;font-size:10px;color:#aaa">600</div><div class="a" style="left:1029.0px;top:189px;width:1px;height:3px;background:#9a9a9a"></div><div class="a" style="left:1039.0px;top:189px;width:1px;height:3px;background:#9a9a9a"></div><div class="a" style="left:1049.0px;top:189px;width:1px;height:3px;background:#9a9a9a"></div><div class="a" style="left:1059.0px;top:189px;width:1px;height:3px;background:#9a9a9a"></div><div class="a" style="left:1069.0px;top:185px;width:1px;height:7px;background:#9a9a9a"></div><div class="a" style="left:1079.0px;top:189px;width:1px;height:3px;background:#9a9a9a"></div><div class="a" style="left:1089.0px;top:189px;width:1px;height:3px;background:#9a9a9a"></div><div class="a" style="left:1099.0px;top:189px;width:1px;height:3px;background:#9a9a9a"></div><div class="a" style="left:1109.0px;top:189px;width:1px;height:3px;background:#9a9a9a"></div><div class="a" style="left:1119.0px;top:175px;width:1px;height:17px;background:#9a9a9a"></div><div class="t" style="left:1122.5px;top:178px;font-size:10px;color:#aaa">700</div><div class="a" style="left:1129.0px;top:189px;width:1px;height:3px;background:#9a9a9a"></div><div class="a" style="left:1139.0px;top:189px;width:1px;height:3px;background:#9a9a9a"></div><div class="a" style="left:1149.0px;top:189px;width:1px;height:3px;background:#9a9a9a"></div><div class="a" style="left:1159.0px;top:189px;width:1px;height:3px;background:#9a9a9a"></div><div class="a" style="left:1169.0px;top:185px;width:1px;height:7px;background:#9a9a9a"></div><div class="a" style="left:259px;top:175px;width:18px;height:17px;background:#fff"></div><svg style="left:262px;top:178px" width="11" height="11" viewBox="0 0 11 11"><circle cx="5.5" cy="5.5" r="4.3" stroke="#333" stroke-width="1.2" fill="none"/><path d="M5.5 0.5 V2.5 M5.5 8.5 V10.5 M0.5 5.5 H2.5 M8.5 5.5 H10.5" stroke="#333" stroke-width="1.1"/></svg><div class="a" style="left:259px;top:193px;width:18px;height:904px;background:#f3f3f3"></div><div class="a" style="left:259px;top:237px;width:18px;height:759px;background:#fff"></div><div class="a" style="left:276px;top:193px;width:1px;height:904px;background:#9a9a9a"></div><div class="a" style="left:276px;top:237px;width:1px;height:759px;background:#6146bd"></div><div class="a" style="left:273px;top:197.0px;width:3px;height:1px;background:#9a9a9a"></div><div class="a" style="left:273px;top:207.0px;width:3px;height:1px;background:#9a9a9a"></div><div class="a" style="left:273px;top:217.0px;width:3px;height:1px;background:#9a9a9a"></div><div class="a" style="left:273px;top:227.0px;width:3px;height:1px;background:#9a9a9a"></div><div class="a" style="left:259px;top:237.0px;width:18px;height:1px;background:#6146bd"></div><div class="t" style="left:262px;top:242.0px;font-size:10px;color:#6146bd;transform-origin:0 0;transform:translate(0px,0px) rotate(-90deg) translate(-5.56px,0px)">0</div><div class="a" style="left:273px;top:247.0px;width:3px;height:1px;background:#6146bd"></div><div class="a" style="left:273px;top:257.0px;width:3px;height:1px;background:#6146bd"></div><div class="a" style="left:273px;top:267.0px;width:3px;height:1px;background:#6146bd"></div><div class="a" style="left:273px;top:277.0px;width:3px;height:1px;background:#6146bd"></div><div class="a" style="left:269px;top:287.0px;width:7px;height:1px;background:#6146bd"></div><div class="a" style="left:273px;top:297.0px;width:3px;height:1px;background:#6146bd"></div><div class="a" style="left:273px;top:307.0px;width:3px;height:1px;background:#6146bd"></div><div class="a" style="left:273px;top:317.0px;width:3px;height:1px;background:#6146bd"></div><div class="a" style="left:273px;top:327.0px;width:3px;height:1px;background:#6146bd"></div><div class="a" style="left:259px;top:337.0px;width:18px;height:1px;background:#6146bd"></div><div class="t" style="left:262px;top:342.0px;font-size:10px;color:#6146bd;transform-origin:0 0;transform:translate(0px,0px) rotate(-90deg) translate(-16.68px,0px)">100</div><div class="a" style="left:273px;top:347.0px;width:3px;height:1px;background:#6146bd"></div><div class="a" style="left:273px;top:357.0px;width:3px;height:1px;background:#6146bd"></div><div class="a" style="left:273px;top:367.0px;width:3px;height:1px;background:#6146bd"></div><div class="a" style="left:273px;top:377.0px;width:3px;height:1px;background:#6146bd"></div><div class="a" style="left:269px;top:387.0px;width:7px;height:1px;background:#6146bd"></div><div class="a" style="left:273px;top:397.0px;width:3px;height:1px;background:#6146bd"></div><div class="a" style="left:273px;top:407.0px;width:3px;height:1px;background:#6146bd"></div><div class="a" style="left:273px;top:417.0px;width:3px;height:1px;background:#6146bd"></div><div class="a" style="left:273px;top:427.0px;width:3px;height:1px;background:#6146bd"></div><div class="a" style="left:259px;top:437.0px;width:18px;height:1px;background:#6146bd"></div><div class="t" style="left:262px;top:442.0px;font-size:10px;color:#6146bd;transform-origin:0 0;transform:translate(0px,0px) rotate(-90deg) translate(-16.68px,0px)">200</div><div class="a" style="left:273px;top:447.0px;width:3px;height:1px;background:#6146bd"></div><div class="a" style="left:273px;top:457.0px;width:3px;height:1px;background:#6146bd"></div><div class="a" style="left:273px;top:467.0px;width:3px;height:1px;background:#6146bd"></div><div class="a" style="left:273px;top:477.0px;width:3px;height:1px;background:#6146bd"></div><div class="a" style="left:269px;top:487.0px;width:7px;height:1px;background:#6146bd"></div><div class="a" style="left:273px;top:497.0px;width:3px;height:1px;background:#6146bd"></div><div class="a" style="left:273px;top:507.0px;width:3px;height:1px;background:#6146bd"></div><div class="a" style="left:273px;top:517.0px;width:3px;height:1px;background:#6146bd"></div><div class="a" style="left:273px;top:527.0px;width:3px;height:1px;background:#6146bd"></div><div class="a" style="left:259px;top:537.0px;width:18px;height:1px;background:#6146bd"></div><div class="t" style="left:262px;top:542.0px;font-size:10px;color:#6146bd;transform-origin:0 0;transform:translate(0px,0px) rotate(-90deg) translate(-16.68px,0px)">300</div><div class="a" style="left:273px;top:547.0px;width:3px;height:1px;background:#6146bd"></div><div class="a" style="left:273px;top:557.0px;width:3px;height:1px;background:#6146bd"></div><div class="a" style="left:273px;top:567.0px;width:3px;height:1px;background:#6146bd"></div><div class="a" style="left:273px;top:577.0px;width:3px;height:1px;background:#6146bd"></div><div class="a" style="left:269px;top:587.0px;width:7px;height:1px;background:#6146bd"></div><div class="a" style="left:273px;top:597.0px;width:3px;height:1px;background:#6146bd"></div><div class="a" style="left:273px;top:607.0px;width:3px;height:1px;background:#6146bd"></div><div class="a" style="left:273px;top:617.0px;width:3px;height:1px;background:#6146bd"></div><div class="a" style="left:273px;top:627.0px;width:3px;height:1px;background:#6146bd"></div><div class="a" style="left:259px;top:637.0px;width:18px;height:1px;background:#6146bd"></div><div class="t" style="left:262px;top:642.0px;font-size:10px;color:#6146bd;transform-origin:0 0;transform:translate(0px,0px) rotate(-90deg) translate(-16.68px,0px)">400</div><div class="a" style="left:273px;top:647.0px;width:3px;height:1px;background:#6146bd"></div><div class="a" style="left:273px;top:657.0px;width:3px;height:1px;background:#6146bd"></div><div class="a" style="left:273px;top:667.0px;width:3px;height:1px;background:#6146bd"></div><div class="a" style="left:273px;top:677.0px;width:3px;height:1px;background:#6146bd"></div><div class="a" style="left:269px;top:687.0px;width:7px;height:1px;background:#6146bd"></div><div class="a" style="left:273px;top:697.0px;width:3px;height:1px;background:#6146bd"></div><div class="a" style="left:273px;top:707.0px;width:3px;height:1px;background:#6146bd"></div><div class="a" style="left:273px;top:717.0px;width:3px;height:1px;background:#6146bd"></div><div class="a" style="left:273px;top:727.0px;width:3px;height:1px;background:#6146bd"></div><div class="a" style="left:259px;top:737.0px;width:18px;height:1px;background:#6146bd"></div><div class="t" style="left:262px;top:742.0px;font-size:10px;color:#6146bd;transform-origin:0 0;transform:translate(0px,0px) rotate(-90deg) translate(-16.68px,0px)">500</div><div class="a" style="left:273px;top:747.0px;width:3px;height:1px;background:#6146bd"></div><div class="a" style="left:273px;top:757.0px;width:3px;height:1px;background:#6146bd"></div><div class="a" style="left:273px;top:767.0px;width:3px;height:1px;background:#6146bd"></div><div class="a" style="left:273px;top:777.0px;width:3px;height:1px;background:#6146bd"></div><div class="a" style="left:269px;top:787.0px;width:7px;height:1px;background:#6146bd"></div><div class="a" style="left:273px;top:797.0px;width:3px;height:1px;background:#6146bd"></div><div class="a" style="left:273px;top:807.0px;width:3px;height:1px;background:#6146bd"></div><div class="a" style="left:273px;top:817.0px;width:3px;height:1px;background:#6146bd"></div><div class="a" style="left:273px;top:827.0px;width:3px;height:1px;background:#6146bd"></div><div class="a" style="left:259px;top:837.0px;width:18px;height:1px;background:#6146bd"></div><div class="t" style="left:262px;top:842.0px;font-size:10px;color:#6146bd;transform-origin:0 0;transform:translate(0px,0px) rotate(-90deg) translate(-16.68px,0px)">600</div><div class="a" style="left:273px;top:847.0px;width:3px;height:1px;background:#6146bd"></div><div class="a" style="left:273px;top:857.0px;width:3px;height:1px;background:#6146bd"></div><div class="a" style="left:273px;top:867.0px;width:3px;height:1px;background:#6146bd"></div><div class="a" style="left:273px;top:877.0px;width:3px;height:1px;background:#6146bd"></div><div class="a" style="left:269px;top:887.0px;width:7px;height:1px;background:#6146bd"></div><div class="a" style="left:273px;top:897.0px;width:3px;height:1px;background:#6146bd"></div><div class="a" style="left:273px;top:907.0px;width:3px;height:1px;background:#6146bd"></div><div class="a" style="left:273px;top:917.0px;width:3px;height:1px;background:#6146bd"></div><div class="a" style="left:273px;top:927.0px;width:3px;height:1px;background:#6146bd"></div><div class="a" style="left:259px;top:937.0px;width:18px;height:1px;background:#6146bd"></div><div class="t" style="left:262px;top:942.0px;font-size:10px;color:#6146bd;transform-origin:0 0;transform:translate(0px,0px) rotate(-90deg) translate(-16.68px,0px)">700</div><div class="a" style="left:273px;top:947.0px;width:3px;height:1px;background:#6146bd"></div><div class="a" style="left:273px;top:957.0px;width:3px;height:1px;background:#6146bd"></div><div class="a" style="left:273px;top:967.0px;width:3px;height:1px;background:#6146bd"></div><div class="a" style="left:273px;top:977.0px;width:3px;height:1px;background:#6146bd"></div><div class="a" style="left:269px;top:987.0px;width:7px;height:1px;background:#6146bd"></div><div class="a" style="left:273px;top:997.0px;width:3px;height:1px;background:#9a9a9a"></div><div class="a" style="left:273px;top:1007.0px;width:3px;height:1px;background:#9a9a9a"></div><div class="a" style="left:273px;top:1017.0px;width:3px;height:1px;background:#9a9a9a"></div><div class="a" style="left:273px;top:1027.0px;width:3px;height:1px;background:#9a9a9a"></div><div class="a" style="left:259px;top:1037.0px;width:18px;height:1px;background:#9a9a9a"></div><div class="t" style="left:262px;top:1042.0px;font-size:10px;color:#aaa;transform-origin:0 0;transform:translate(0px,0px) rotate(-90deg) translate(-16.68px,0px)">800</div><div class="a" style="left:273px;top:1047.0px;width:3px;height:1px;background:#9a9a9a"></div><div class="a" style="left:273px;top:1057.0px;width:3px;height:1px;background:#9a9a9a"></div><div class="a" style="left:273px;top:1067.0px;width:3px;height:1px;background:#9a9a9a"></div><div class="a" style="left:273px;top:1077.0px;width:3px;height:1px;background:#9a9a9a"></div><div class="a" style="left:269px;top:1087.0px;width:7px;height:1px;background:#9a9a9a"></div><div class="a" style="left:419px;top:237px;width:390px;height:860px;background:#fff"></div><svg style="left:418px;top:236px" width="392" height="761" viewBox="0 0 392 761"><rect x="0.5" y="0.5" width="391" height="760" fill="none" stroke="#6146bd" stroke-width="1" stroke-dasharray="4 3"/></svg><svg style="left:259px;top:1080px" width="914" height="3" viewBox="0 0 914 3"><path d="M0 1.5 H914" stroke="#8a2190" stroke-width="1.5" stroke-dasharray="9 4"/></svg>
<div class="a" style="left:439px;top:203px;width:350px;height:32px;background:#fff;border:1.3px solid #6146bd;border-radius:6px"></div><div class="a" style="left:759px;top:204px;width:1.2px;height:30px;background:#6146bd"></div><div class="t" style="left:449px;top:212.5px;font-size:13px;color:#6146bd">Highlights</div><svg style="left:512px;top:216px" width="8" height="5" viewBox="0 0 8 5"><path d="M0 0 H8 L4 5 Z" fill="#6146bd"/></svg><svg style="left:635px;top:212px" width="8" height="13" viewBox="0 0 8 13"><path d="M7 1 L1.5 6.5 L7 12" stroke="#6146bd" stroke-width="1.3" fill="none"/></svg><svg style="left:663px;top:212px" width="8" height="13" viewBox="0 0 8 13"><path d="M1 1 L6.5 6.5 L1 12" stroke="#6146bd" stroke-width="1.3" fill="none"/></svg><div class="t" style="left:686px;top:212.5px;font-size:13px;color:#6146bd">View All</div><svg style="left:739px;top:213px" width="12" height="12" viewBox="0 0 12 12"><path fill-rule="evenodd" d="M0 0 h3 v3 h-3 Z M1 1 v1 h1 v-1 Z M4 0 h3 v3 h-3 Z M5 1 v1 h1 v-1 Z M8 0 h3 v3 h-3 Z M9 1 v1 h1 v-1 Z M0 4 h3 v3 h-3 Z M1 5 v1 h1 v-1 Z M4 4 h3 v3 h-3 Z M5 5 v1 h1 v-1 Z M8 4 h3 v3 h-3 Z M9 5 v1 h1 v-1 Z M0 8 h3 v3 h-3 Z M1 9 v1 h1 v-1 Z M4 8 h3 v3 h-3 Z M5 9 v1 h1 v-1 Z M8 8 h3 v3 h-3 Z M9 9 v1 h1 v-1 Z " fill="#6146bd"/></svg><svg style="left:769px;top:214px" width="9" height="9" viewBox="0 0 9 9"><path d="M0.5 0.5 L8.5 8.5 M8.5 0.5 L0.5 8.5" stroke="#6146bd" stroke-width="1.2"/></svg><div class="a" style="left:433px;top:250px;width:60px;height:40px;background:#f2f2f2;border:1px solid #797979"></div><svg style="left:433px;top:250px" width="60" height="40" viewBox="0 0 60 40"><path d="M1 1 L13 8 M59 1 L47 8 M1 39 L9.5 33.5 M59 39 L50.5 33.5" stroke="#797979" stroke-width="1"/></svg><div class="t" style="left:433px;width:60px;text-align:center;top:259px;font-size:10px;line-height:11px;color:#222;white-space:normal">Logo and<br>Menu</div><div class="a" style="left:500px;top:250px;width:119px;height:40px;background:#fff;border:1px solid #797979"></div><div class="t" style="left:504px;top:263px;font-size:13px;color:#000">Artist Name</div><svg style="left:604px;top:268px" width="10" height="6" viewBox="0 0 10 6"><path d="M0 0 H10 L5 6 Z" fill="#797979"/></svg><div class="a" style="left:667px;top:250px;width:60px;height:40px;background:#f2f2f2;border:1px solid #797979"></div><svg style="left:667px;top:250px" width="60" height="40" viewBox="0 0 60 40"><path d="M1 1 L13 8 M59 1 L47 8 M1 39 L9.5 33.5 M59 39 L50.5 33.5" stroke="#797979" stroke-width="1"/></svg><div class="t" style="left:667px;width:60px;text-align:center;top:259px;font-size:10px;line-height:11px;color:#222;white-space:normal">Notification<br>Bell</div><div class="a" style="left:735px;top:250px;width:60px;height:40px;background:#f2f2f2;border:1px solid #797979"></div><svg style="left:735px;top:250px" width="60" height="40" viewBox="0 0 60 40"><path d="M1 1 L13 8 M59 1 L47 8 M1 39 L9.5 33.5 M59 39 L50.5 33.5" stroke="#797979" stroke-width="1"/></svg><div class="a" style="left:736px;top:251px;width:58px;height:38px;background:#f2f2f2"></div><svg style="left:735px;top:250px" width="60" height="40" viewBox="0 0 60 40"><path d="M1 1 L4 3 M59 1 L56 3" stroke="#797979" stroke-width="1"/></svg><div class="t" style="left:735px;width:60px;text-align:center;top:254px;font-size:10px;line-height:11px;color:#222;white-space:normal">Profile<br>Avatar &amp;<br>Settings</div><div class="t" style="left:433px;top:327px;font-size:28px;font-weight:700;color:#333">Your Highlights</div><div class="a" style="left:433px;top:393px;width:362px;height:541px;background:#d7d7d7"></div><div class="a" style="left:483px;top:451px;width:53px;height:53px;background:#cfcfcf"></div><svg style="left:486px;top:454px" width="47" height="47" viewBox="0 0 47 47"><rect width="46.8" height="46.8" fill="#fff"/><path d="M2.2 21.7 L13 11 L28.5 19.7 L37.2 17.4 L45.6 20 V45.7 H2.2 Z" fill="#1a9ad6"/><circle cx="28.75" cy="8" r="3.8" fill="#cfcfcf"/></svg><div class="t" style="left:548px;top:453px;font-size:27.8px;color:#333">Highlight Title</div><div class="t" style="left:548.5px;top:485px;font-size:19.9px;color:#333">Highlight Subtitle</div><div class="a" style="left:481px;top:524px;width:253px;height:1.5px;background:#333"></div><svg style="left:481px;top:552.0px" width="37" height="30" viewBox="0 0 37 30"><path d="M2 0 V27.7 H36" stroke="#000" stroke-width="2.2" fill="none"/><rect x="7.8" y="14.3" width="4" height="9.7" fill="#000"/><rect x="14.1" y="4.9" width="3.8" height="19.1" fill="#000"/><rect x="20.1" y="9.7" width="4.9" height="14.3" fill="#000"/><rect x="27" y="2" width="4" height="22" fill="#000"/></svg><div class="t" style="left:526px;top:555px;font-size:20px;color:#333">Streaming Stat 1</div><svg style="left:481px;top:596.5px" width="37" height="30" viewBox="0 0 37 30"><path d="M2 0 V27.7 H36" stroke="#000" stroke-width="2.2" fill="none"/><rect x="7.8" y="14.3" width="4" height="9.7" fill="#000"/><rect x="14.1" y="4.9" width="3.8" height="19.1" fill="#000"/><rect x="20.1" y="9.7" width="4.9" height="14.3" fill="#000"/><rect x="27" y="2" width="4" height="22" fill="#000"/></svg><div class="t" style="left:526px;top:599.5px;font-size:20px;color:#333">Streaming Stat 2</div><svg style="left:481px;top:641.0px" width="37" height="30" viewBox="0 0 37 30"><path d="M2 0 V27.7 H36" stroke="#000" stroke-width="2.2" fill="none"/><rect x="7.8" y="14.3" width="4" height="9.7" fill="#000"/><rect x="14.1" y="4.9" width="3.8" height="19.1" fill="#000"/><rect x="20.1" y="9.7" width="4.9" height="14.3" fill="#000"/><rect x="27" y="2" width="4" height="22" fill="#000"/></svg><div class="t" style="left:526px;top:644px;font-size:20px;color:#333">Streaming Stat 3</div><svg style="left:481px;top:685.5px" width="37" height="30" viewBox="0 0 37 30"><path d="M2 0 V27.7 H36" stroke="#000" stroke-width="2.2" fill="none"/><rect x="7.8" y="14.3" width="4" height="9.7" fill="#000"/><rect x="14.1" y="4.9" width="3.8" height="19.1" fill="#000"/><rect x="20.1" y="9.7" width="4.9" height="14.3" fill="#000"/><rect x="27" y="2" width="4" height="22" fill="#000"/></svg><div class="t" style="left:526px;top:688.5px;font-size:20px;color:#333">Streaming Stat 4</div><div class="a" style="left:482px;top:864px;width:251px;height:35.5px;background:#1f95d6;border-radius:3px;box-shadow:0 2px 2px rgba(0,0,0,0.3)"></div><div class="t" style="left:524px;top:875px;font-size:14px;font-weight:700;color:#fff;letter-spacing:0.1px">Share to Social Media</div><svg style="left:681px;top:872px" width="20" height="20" viewBox="0 0 20 20"><path d="M18.7 0.9 L0.9 11.35 L5.8 13.7 L7.4 18.8 L11.4 16.1 L16.7 17.4 Z" fill="#fff"/><path d="M15.5 4.5 L6.8 13.6" stroke="#1f95d6" stroke-width="0.9"/></svg><div class="a" style="left:560.8px;top:959.5px;width:15px;height:15px;border-radius:50%;background:#0e9cf0"></div><div class="a" style="left:583.0px;top:959.5px;width:15px;height:15px;border-radius:50%;background:#a8a8a8"></div><div class="a" style="left:604.0px;top:959.5px;width:15px;height:15px;border-radius:50%;background:#a8a8a8"></div><div class="a" style="left:626.0px;top:959.5px;width:15px;height:15px;border-radius:50%;background:#a8a8a8"></div><svg style="left:534px;top:1022px" width="40" height="36" viewBox="0 0 40 36"><path fill-rule="evenodd" d="M19 0 L37.8 17.6 H32 V33 H21.1 V20.9 H16.9 V33 H6.15 V17.6 H0.2 Z M19 5 L28 14 V29 H24 V17.1 H14 V29 H9.8 V14 Z" fill="#0aa0f0"/></svg><svg style="left:652px;top:1021px" width="36" height="36" viewBox="0 0 36 36"><circle cx="13.2" cy="13.1" r="10.1" stroke="#999" stroke-width="4.3" fill="none"/><path d="M20.5 20.5 L32.8 32.9" stroke="#999" stroke-width="4.4"/></svg>
<div class="a" style="left:823px;top:237px;width:242px;height:758px;background:#263248"></div><div class="t" style="left:854px;top:274.0px;font-size:29px;line-height:29px;font-weight:700;color:#fff;letter-spacing:0.45px;-webkit-text-stroke:0.6px #fff">Mobile</div><div class="t" style="left:854px;top:316.0px;font-size:29px;line-height:29px;font-weight:700;color:#fff;letter-spacing:0.45px;-webkit-text-stroke:0.6px #fff">Highlights</div><div class="t" style="left:854px;top:358.0px;font-size:29px;line-height:29px;font-weight:700;color:#fff;letter-spacing:0.45px;-webkit-text-stroke:0.6px #fff">Card</div><div class="t" style="left:854px;top:400.0px;font-size:29px;line-height:29px;font-weight:700;color:#fff;letter-spacing:0.45px;-webkit-text-stroke:0.6px #fff">Carousel</div><div class="t" style="left:854px;top:466.5px;font-size:18px;line-height:18px;color:#f5f5f5;letter-spacing:0.85px;-webkit-text-stroke:0.25px #f5f5f5">This page is a</div><div class="t" style="left:854px;top:493.5px;font-size:18px;line-height:18px;color:#f5f5f5;letter-spacing:0.85px;-webkit-text-stroke:0.25px #f5f5f5">carousel that</div><div class="t" style="left:854px;top:520.5px;font-size:18px;line-height:18px;color:#f5f5f5;letter-spacing:0.85px;-webkit-text-stroke:0.25px #f5f5f5">displays "shareable</div><div class="t" style="left:854px;top:547.5px;font-size:18px;line-height:18px;color:#f5f5f5;letter-spacing:0.85px;-webkit-text-stroke:0.25px #f5f5f5">cards".</div><div class="t" style="left:854px;top:601.5px;font-size:18px;line-height:18px;color:#f5f5f5;letter-spacing:0.85px;-webkit-text-stroke:0.25px #f5f5f5">The page needs to</div><div class="t" style="left:854px;top:628.5px;font-size:18px;line-height:18px;color:#f5f5f5;letter-spacing:0.85px;-webkit-text-stroke:0.25px #f5f5f5">be added to the</div><div class="t" style="left:854px;top:655.5px;font-size:18px;line-height:18px;color:#f5f5f5;letter-spacing:0.85px;-webkit-text-stroke:0.25px #f5f5f5">bottom nav (<b>Home</b></div><div class="t" style="left:854px;top:682.5px;font-size:18px;line-height:18px;color:#f5f5f5;letter-spacing:0.85px;-webkit-text-stroke:0.25px #f5f5f5"><b>Button</b>).</div><div class="t" style="left:854px;top:736.5px;font-size:18px;line-height:18px;color:#f5f5f5;letter-spacing:0.85px;-webkit-text-stroke:0.25px #f5f5f5">In each card, you</div><div class="t" style="left:854px;top:763.5px;font-size:18px;line-height:18px;color:#f5f5f5;letter-spacing:0.85px;-webkit-text-stroke:0.25px #f5f5f5">would be able to</div><div class="t" style="left:854px;top:790.5px;font-size:18px;line-height:18px;color:#f5f5f5;letter-spacing:0.85px;-webkit-text-stroke:0.25px #f5f5f5">see the artist</div><div class="t" style="left:854px;top:817.5px;font-size:18px;line-height:18px;color:#f5f5f5;letter-spacing:0.85px;-webkit-text-stroke:0.25px #f5f5f5">image, or album art</div><div class="t" style="left:854px;top:844.5px;font-size:18px;line-height:18px;color:#f5f5f5;letter-spacing:0.85px;-webkit-text-stroke:0.25px #f5f5f5">image for the given</div><div class="t" style="left:854px;top:871.5px;font-size:18px;line-height:18px;color:#f5f5f5;letter-spacing:0.85px;-webkit-text-stroke:0.25px #f5f5f5">song, and they</div><div class="t" style="left:854px;top:898.5px;font-size:18px;line-height:18px;color:#f5f5f5;letter-spacing:0.85px;-webkit-text-stroke:0.25px #f5f5f5">would be shareable</div><div class="t" style="left:854px;top:925.5px;font-size:18px;line-height:18px;color:#f5f5f5;letter-spacing:0.85px;-webkit-text-stroke:0.25px #f5f5f5">individually.</div>
<!-- right panel -->
<div class="a" style="left:1173px;top:154px;width:1px;height:943px;background:#dcdcdc"></div><svg style="left:1190px;top:167px" width="10" height="15" viewBox="0 0 10 15"><path d="M6.5 0.7 L1 8.3 H5 L3.3 14.3 L9 6.5 H5 Z" stroke="#2a6ae8" stroke-width="1.1" fill="none" stroke-linejoin="round"/></svg><div class="t" style="left:1203px;top:168px;font-size:13px;color:#2a6ae8">Interactions</div><div class="a" style="left:1190px;top:189px;width:81px;height:3px;background:#2a6ae8"></div><svg style="left:1297px;top:168px" width="13" height="13" viewBox="0 0 13 13"><path d="M1.5 0.6 H11.5 Q12.4 0.6 12.4 1.5 V8.5 Q12.4 9.4 11.5 9.4 H7.5 L6.5 12 L5.5 9.4 H1.5 Q0.6 9.4 0.6 8.5 V1.5 Q0.6 0.6 1.5 0.6 Z" stroke="#444" stroke-width="1.1" fill="none"/><path d="M3.5 4 H9.5 M3.5 6.3 H7.5" stroke="#444" stroke-width="1"/></svg><div class="t" style="left:1313px;top:168px;font-size:13px;color:#333">Notes</div><svg style="left:1373px;top:168px" width="12" height="13" viewBox="0 0 12 13"><circle cx="6" cy="6.5" r="5.4" stroke="#444" stroke-width="1.1" fill="none"/><path d="M6 1.1 V11.9 M6 4 L10 2.5 M6 7 L11 5.5 M6 10 L10 8.5" stroke="#444" stroke-width="0.9"/></svg><div class="t" style="left:1388px;top:168px;font-size:13px;color:#333">Style</div><div class="a" style="left:1174px;top:192px;width:260px;height:1px;background:#e0e0e0"></div><div class="t" style="left:1189px;top:206px;font-size:14.3px;color:#333">Main Panel</div><div class="a" style="left:1174px;top:229px;width:260px;height:1px;background:#e0e0e0"></div><div class="t" style="left:1189px;top:240px;font-size:11px;color:#999;letter-spacing:0.66px">DYNAMIC PANEL INTERACTIONS</div><svg style="left:1398px;top:240px" width="14" height="13" viewBox="0 0 14 13"><path d="M5.5 1.5 H0.7 V12.3 H11.5 V7.5" stroke="#444" stroke-width="1.2" fill="none"/><path d="M7 6.5 L13 0.7 M8.5 0.7 H13.3 V5.5" stroke="#444" stroke-width="1.2" fill="none"/></svg><div class="a" style="left:1190px;top:266px;width:228px;height:28px;background:#2d6ef5;border-radius:2px"></div><div class="t" style="left:1190px;width:228px;text-align:center;top:272.5px;font-size:14.6px;color:#fff">New Interaction</div><div class="t" style="left:1174px;width:260px;text-align:center;top:335.5px;font-size:11.3px;color:#999">COMMON INTERACTIONS</div><div class="a" style="left:1189px;top:359px;width:230px;height:23px;border:1px solid #dedede;border-radius:3px"></div><div class="t" style="left:1189px;width:230px;text-align:center;top:365px;font-size:12px;color:#a0a0a0">Click or Tap<svg style="position:relative;display:inline-block;vertical-align:middle;margin:0 4px;top:-1px" width="11" height="7" viewBox="0 0 11 7"><path d="M0 3.5 H8" stroke="#999" stroke-width="1.6"/><path d="M6.5 0.5 L10.5 3.5 L6.5 6.5 Z" fill="#999"/></svg>Set Next State</div><div class="a" style="left:1189px;top:390px;width:230px;height:23px;border:1px solid #dedede;border-radius:3px"></div><div class="t" style="left:1189px;width:230px;text-align:center;top:396px;font-size:12px;color:#a0a0a0">Swiped Left<svg style="position:relative;display:inline-block;vertical-align:middle;margin:0 4px;top:-1px" width="11" height="7" viewBox="0 0 11 7"><path d="M0 3.5 H8" stroke="#999" stroke-width="1.6"/><path d="M6.5 0.5 L10.5 3.5 L6.5 6.5 Z" fill="#999"/></svg>Set Next State</div><div class="a" style="left:1189px;top:421px;width:230px;height:23px;border:1px solid #dedede;border-radius:3px"></div><div class="t" style="left:1189px;width:230px;text-align:center;top:427px;font-size:12px;color:#a0a0a0">Swiped Right<svg style="position:relative;display:inline-block;vertical-align:middle;margin:0 4px;top:-1px" width="11" height="7" viewBox="0 0 11 7"><path d="M0 3.5 H8" stroke="#999" stroke-width="1.6"/><path d="M6.5 0.5 L10.5 3.5 L6.5 6.5 Z" fill="#999"/></svg>Set Previous State</div><div class="a" style="left:1174px;top:504px;width:260px;height:1px;background:#e0e0e0"></div><div class="t" style="left:1189px;top:514px;font-size:11px;color:#999;letter-spacing:0.55px">DYNAMIC PANEL PROPS</div><div class="a" style="left:1365px;top:509.5px;width:53px;height:19.5px;background:#f3f3f3;border:1px solid #e3e3e3;border-radius:3px"></div><div class="t" style="left:1365px;width:53px;text-align:center;top:514px;font-size:11px;color:#333">Show All</div><div class="a" style="left:1190px;top:545px;width:11px;height:11px;border:1px solid #777;border-radius:2px"></div><div class="t" style="left:1207px;top:536px;font-size:12.7px;line-height:15px;color:#333;white-space:normal">Apply Mouse Style Effects on All<br>Widgets in Panel</div><div class="a" style="left:1174px;top:1057px;width:260px;height:1px;background:#e0e0e0"></div><div class="a" style="left:1197px;top:1074px;width:13px;height:13px;border-radius:50%;background:#2a6ae8"></div><div class="t" style="left:1197px;width:13px;text-align:center;top:1075.5px;font-size:9.5px;font-weight:700;color:#fff">?</div><div class="t" style="left:1215px;top:1075px;font-size:12.8px;color:#2a6ae8">Need help with interactions?</div><svg style="left:1399px;top:1076px" width="9" height="9" viewBox="0 0 9 9"><path d="M0.5 0.5 L8.5 8.5 M8.5 0.5 L0.5 8.5" stroke="#999" stroke-width="1"/></svg>
</body></html>
